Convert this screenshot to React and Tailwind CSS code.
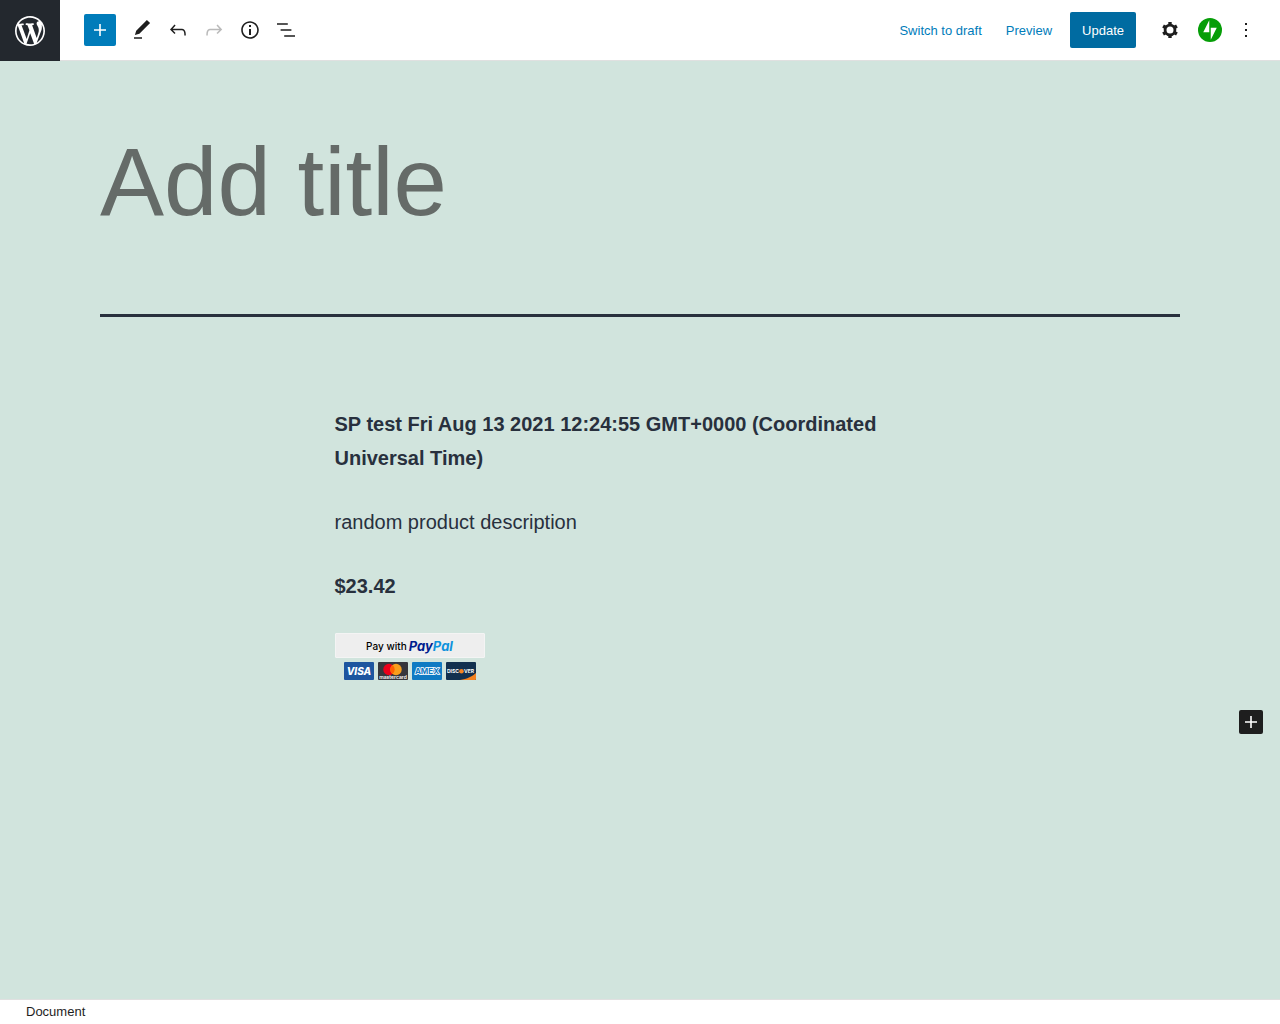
function Icon({ d, className = "size-6", viewBox = "0 0 24 24" }) {
  return (
    <svg viewBox={viewBox} className={className} fill="currentColor" aria-hidden="true">
      <path d={d} />
    </svg>
  );
}

const icons = {
  wordpress:
    "M20 10c0-5.51-4.49-10-10-10C4.48 0 0 4.49 0 10c0 5.52 4.48 10 10 10 5.51 0 10-4.48 10-10zM7.78 15.37L4.37 6.22c.55-.02 1.17-.08 1.17-.08.5-.06.44-1.13-.06-1.11 0 0-1.45.11-2.37.11-.18 0-.37 0-.58-.01C4.12 2.69 6.87 1.11 10 1.11c2.33 0 4.45.87 6.05 2.34-.68-.11-1.65.39-1.65 1.58 0 .74.45 1.36.9 2.1.35.61.55 1.36.55 2.46 0 1.49-1.4 5-1.4 5l-3.03-8.37c.54-.02.82-.17.82-.17.5-.05.44-1.25-.06-1.22 0 0-1.44.12-2.38.12-.87 0-2.33-.12-2.33-.12-.5-.03-.56 1.2-.06 1.22l.92.08 1.26 3.41zM17.41 10c.24-.64.74-1.87.43-4.25.7 1.29 1.05 2.71 1.05 4.25 0 3.29-1.73 6.24-4.4 7.78.97-2.59 1.94-5.2 2.92-7.78zM6.1 18.09C3.12 16.65 1.11 13.53 1.11 10c0-1.3.23-2.48.72-3.59C3.25 10.3 4.67 14.2 6.1 18.09zm4.03-6.63l2.58 6.98c-.86.29-1.76.45-2.71.45-.79 0-1.57-.11-2.29-.33.81-2.38 1.62-4.74 2.42-7.1z",
  plus: "M18 11.2h-5.2V6h-1.6v5.2H6v1.6h5.2V18h1.6v-5.2H18z",
  edit: "M20.1 5.1L16.9 2 6.2 12.7l-1.3 4.4 4.5-1.3L20.1 5.1zM4 20.8h8v-1.5H4v1.5z",
  undo: "M18.3 11.7c-.6-.6-1.4-.9-2.3-.9H6.7l2.9-3.3-1.1-1-4.5 5L8.5 16l1-1-2.7-2.7H16c.5 0 .9.2 1.3.5 1 1 1 3.4 1 4.5v.3h1.5v-.2c0-1.5 0-4.3-1.5-5.7z",
  redo: "M15.6 6.5l-1.1 1 2.9 3.3H8c-.9 0-1.7.3-2.3.9-1.4 1.5-1.4 4.2-1.4 5.6v.2h1.5v-.3c0-1.1 0-3.5 1-4.5.3-.3.7-.5 1.3-.5h9.2L14.5 15l1.1 1.1 4.6-4.6-4.6-5z",
  info: "M12 3.2c-4.8 0-8.8 3.9-8.8 8.8 0 4.8 3.9 8.8 8.8 8.8 4.8 0 8.8-3.9 8.8-8.8 0-4.8-4-8.8-8.8-8.8zm0 16c-4 0-7.2-3.3-7.2-7.2C4.8 8 8 4.8 12 4.8s7.2 3.3 7.2 7.2c0 4-3.2 7.2-7.2 7.2zM11 17h2v-6h-2v6zm0-8h2V7h-2v2z",
  list: "M13.8 5.2H3v1.5h10.8V5.2zm-3.6 12v1.5H21v-1.5H10.2zm7.2-6H6.6v1.5h10.8v-1.5z",
  more: "M13 19h-2v-2h2v2zm0-6h-2v-2h2v2zm0-6h-2V5h2v2z",
};

function CogIcon() {
  return (
    <svg viewBox="0 0 24 24" className="size-6" fill="none" stroke="currentColor" aria-hidden="true">
      <circle cx="12" cy="12" r="4.9" strokeWidth="2.8" />
      <path
        d="M12 4v2.5M12 17.500v2.500M18.930 8l-2.170 1.250M7.240 14.750L5.070 16M18.930 16l-2.170-1.250M7.240 9.250L5.070 8"
        strokeWidth="3.4"
      />
    </svg>
  );
}

function ToolButton({ label, children, disabled = false }) {
  return (
    <button
      type="button"
      aria-label={label}
      disabled={disabled}
      className="flex size-9 items-center justify-center text-[#1e1e1e] disabled:opacity-30"
    >
      {children}
    </button>
  );
}

function Header() {
  return (
    <header className="flex h-[61px] justify-between bg-white text-[13px] leading-5">
      <a
        href="#posts"
        aria-label="View posts"
        className="flex w-[60px] shrink-0 items-center justify-center bg-[#23282e] text-white"
      >
        <Icon d={icons.wordpress} viewBox="-2 -2 24 24" className="size-9" />
      </a>
      <div className="flex grow items-center justify-between border-b border-[#e0e0e0] pr-4 pl-6">
        <div className="flex items-center">
          <button
            type="button"
            aria-label="Add block"
            className="mr-2 flex size-8 items-center justify-center rounded-[2px] bg-[#007cba] text-white"
          >
            <Icon d={icons.plus} />
          </button>
          <ToolButton label="Tools"><Icon d={icons.edit} /></ToolButton>
          <ToolButton label="Undo"><Icon d={icons.undo} /></ToolButton>
          <ToolButton label="Redo" disabled><Icon d={icons.redo} /></ToolButton>
          <ToolButton label="Details"><Icon d={icons.info} /></ToolButton>
          <ToolButton label="List view"><Icon d={icons.list} /></ToolButton>
        </div>
        <div className="flex items-center">
          <button type="button" className="h-9 px-3 pt-0.5 text-[#007cba]">Switch to draft</button>
          <button type="button" className="mr-1.5 h-9 px-3 pt-0.5 text-[#007cba]">Preview</button>
          <button type="button" className="mr-4 h-9 rounded-[2px] bg-[#006ba1] px-3 pt-0.5 text-white">Update</button>
          <div className="mr-1">
            <ToolButton label="Settings"><CogIcon /></ToolButton>
          </div>
          <ToolButton label="Jetpack">
            <svg viewBox="0 0 32 32" className="size-6" aria-hidden="true">
              <circle cx="16" cy="16" r="16" fill="#069e08" />
              <path d="M15 19H7l8-16zM17 29V13h8z" fill="#fff" />
            </svg>
          </ToolButton>
          <ToolButton label="Options"><Icon d={icons.more} /></ToolButton>
        </div>
      </div>
    </header>
  );
}

function Cards() {
  return (
    <svg viewBox="0 0 150 19" className="h-[19px] w-[150px]" role="img" aria-label="Accepted cards">
      <rect x="9" width="30" height="18" rx="1" fill="#1d559f" />
      <text x="24" y="12.5" textAnchor="middle" fill="#fff" fontFamily="Inter, sans-serif" fontWeight="800" fontStyle="italic" fontSize="10">VISA</text>
      <rect x="43" width="30" height="18" rx="1" fill="#36363c" />
      <circle cx="54" cy="7.5" r="5.7" fill="#eb001b" />
      <circle cx="61" cy="7.5" r="5.7" fill="#f79e1b" />
      <path d="M57.5 3a5.7 5.7 0 0 1 0 9 5.7 5.7 0 0 1 0-9z" fill="#ff5f00" />
      <text x="58" y="17" textAnchor="middle" fill="#fff" fontFamily="Inter, sans-serif" fontWeight="600" fontSize="5">mastercard</text>
      <rect x="77" width="30" height="18" rx="1" fill="#0f7ac3" />
      <text x="92" y="12" textAnchor="middle" fill="#0f7ac3" stroke="#fff" strokeWidth="1.6" paintOrder="stroke" fontFamily="Inter, sans-serif" fontWeight="700" fontSize="8">AMEX</text>
      <rect x="111" width="30" height="18" rx="1" fill="#12304f" />
      <path d="M141 11v6a1 1 0 0 1-1 1H125c7-1 13-4 16-7z" fill="#f58220" />
      <text x="112" y="11" fill="#fff" fontFamily="Inter, sans-serif" fontWeight="700" fontSize="5">DISC</text>
      <circle cx="126.5" cy="9.2" r="2.3" fill="#f58220" />
      <text x="129" y="11" fill="#fff" fontFamily="Inter, sans-serif" fontWeight="700" fontSize="5">VER</text>
    </svg>
  );
}

function PaymentBlock() {
  return (
    <div className="flex w-[150px] flex-col gap-1">
      <div className="flex h-[25px] items-center justify-center gap-0.5 rounded-[1px] border border-[#f4f4f4] bg-[#eeeeee] whitespace-nowrap">
        <span className="font-['Inter',sans-serif] text-[10px] leading-4 font-medium text-black">Pay with</span>
        <span className="font-['Inter',sans-serif] text-[13px] leading-4 font-bold text-[#001c8e] italic">
          Pay<span className="text-[#0f93dd]">Pal</span>
        </span>
      </div>
      <Cards />
    </div>
  );
}

export default function App() {
  return (
    <div className="flex min-h-screen flex-col bg-[#d1e4dd] font-['Liberation_Sans',Arial,sans-serif]">
      <Header />
      <main className="grow pb-10 text-[20px] leading-[34px] text-[#28303d]">
        <div className="px-[100px] pt-[57px]">
          <div className="border-b-[3px] border-[#28303d] pb-[68px]">
            <input
              type="text"
              aria-label="Add title"
              placeholder="Add title"
              className="block h-32 w-full bg-transparent text-[96px] leading-[128px] outline-none placeholder:text-[#656b68]"
            />
          </div>
        </div>
        <article className="mx-auto mt-[90px] flex max-w-[611px] flex-col gap-[30px]">
          <p className="font-bold">
            SP test Fri Aug 13 2021 12:24:55 GMT+0000 (Coordinated Universal Time)
          </p>
          <p>random product description</p>
          <p className="font-bold">$23.42</p>
          <PaymentBlock />
        </article>
        <div className="mt-[29px] flex justify-end pr-[17px]">
          <button
            type="button"
            aria-label="Add block"
            className="flex size-6 items-center justify-center rounded-[2px] bg-[#1e1e1e] text-white"
          >
            <Icon d={icons.plus} />
          </button>
        </div>
      </main>
      <footer className="flex h-[25px] items-center border-t border-[#e0e0e0] bg-white px-[26px] text-[13px] leading-6 text-[#1e1e1e]">
        Document
      </footer>
    </div>
  );
}
